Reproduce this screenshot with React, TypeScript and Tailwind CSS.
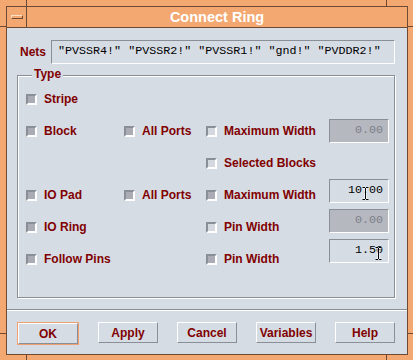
import React from 'react';

const RED = 'text-[#800000]';

// petite case à cocher Motif (enfoncée)
const Check: React.FC<{ light?: boolean }> = ({ light }) => (
  <span
    className={`block w-[11px] h-[11px] shrink-0 border-2 border-t-[#8a8e96] border-l-[#8a8e96] border-b-white border-r-white ${
      light ? 'bg-[#d3d7de]' : 'bg-[#a9acb4]'
    }`}
  />
);

const Toggle: React.FC<{ label: string; light?: boolean }> = ({ label, light }) => (
  <div className="flex items-center gap-[7px]">
    <Check light={light} />
    <span className={`text-[12px] font-bold ${RED} leading-none`}>{label}</span>
  </div>
);

const IBeam: React.FC<{ className: string }> = ({ className }) => (
  <svg className={className} width="7" height="13" viewBox="0 0 7 13">
    <path d="M0.5 0.5h2.5M4 0.5h2.5M3.5 1v11M0.5 12.5h2.5M4 12.5h2.5" stroke="#fff" strokeWidth="2" />
    <path d="M0.5 0.5h2.5M4 0.5h2.5M3.5 1v11M0.5 12.5h2.5M4 12.5h2.5" stroke="#000" strokeWidth="1" />
  </svg>
);

const Field: React.FC<{ value: string; disabled?: boolean; cursor?: string; className?: string }> = ({
  value,
  disabled,
  cursor,
  className = '',
}) => (
  <div
    className={`relative h-[24px] w-[60px] flex items-center justify-end pr-[5px] border border-t-[#8a8e96] border-l-[#8a8e96] border-b-white border-r-white font-['Liberation_Mono',monospace] text-[11.7px] ${
      disabled ? 'bg-[#b6b8c0] text-[#7d7f88]' : 'text-black'
    } ${className}`}
  >
    {value}
    {cursor && <IBeam className={`absolute top-[7px] ${cursor}`} />}
  </div>
);

const Btn: React.FC<{ label: string }> = ({ label }) => (
  <button
    className={`w-[60px] h-[21px] border border-t-white border-l-white border-b-[#8a8e96] border-r-[#8a8e96] bg-[#d6dce4] text-[12px] font-bold ${RED} leading-none`}
  >
    {label}
  </button>
);

export default function App() {
  return (
    <div className="relative w-[413px] h-[360px] bg-[#f3a872] pt-[6px] pl-[6px] pr-[5px] pb-[5px] flex font-['Liberation_Sans',Arial,sans-serif]">
      {/* repères de coin du cadre */}
      <div className="absolute left-[26px] top-0 w-px h-[6px] bg-[#6e4a34]" />
      <div className="absolute left-[386px] top-0 w-px h-[6px] bg-[#6e4a34]" />
      <div className="absolute left-[26px] bottom-0 w-px h-[5px] bg-[#6e4a34]" />
      <div className="absolute left-[386px] bottom-0 w-px h-[5px] bg-[#6e4a34]" />
      <div className="absolute left-0 top-[26px] w-[6px] h-px bg-[#6e4a34]" />
      <div className="absolute left-0 top-[333px] w-[6px] h-px bg-[#6e4a34]" />
      <div className="absolute right-0 top-[26px] w-[5px] h-px bg-[#6e4a34]" />
      <div className="absolute right-0 top-[333px] w-[5px] h-px bg-[#6e4a34]" />

      <div className="flex-1 flex flex-col border border-[#6e4a34]">
        {/* barre de titre */}
        <div className="h-[21px] flex border-b border-[#6e4a34]">
          <div className="w-[20px] border-r border-[#6e4a34] flex items-center justify-center">
            <div className="w-[12px] h-[4px] border border-t-[#fde0c4] border-l-[#fde0c4] border-b-[#6e4a34] border-r-[#6e4a34]" />
          </div>
          <div className="flex-1 flex items-center justify-center text-white font-bold text-[14.5px] leading-none">
            Connect Ring
          </div>
        </div>

        {/* contenu */}
        <div className="flex-1 bg-[#d6dce4] flex flex-col">
          <div className="mt-[12px] pl-[13px] flex items-center gap-[5px]">
            <span className={`text-[12px] font-bold ${RED}`}>Nets</span>
            <div className="w-[344px] h-[24px] flex items-center pl-[6px] border border-t-[#8a8e96] border-l-[#8a8e96] border-b-white border-r-white font-['Liberation_Mono',monospace] text-[11.7px] text-black whitespace-pre">
              "PVSSR4!" "PVSSR2!" "PVSSR1!" "gnd!" "PVDDR2!"
            </div>
          </div>

          {/* groupe Type */}
          <div className="relative mt-[11px] ml-[10px] w-[378px] h-[223px] border border-[#8a8e96] shadow-[inset_1px_1px_0_#fff,1px_1px_0_#fff] flex">
            <span className={`absolute left-[14px] -top-[8px] px-[2px] bg-[#d6dce4] text-[12px] font-bold ${RED} leading-none`}>
              Type
            </span>

            <div className="pt-[7px] pl-[8px] grid grid-cols-[98px_82px_123px] auto-rows-[32px] items-center">
              <Toggle label="Stripe" />
              <div />
              <div />

              <Toggle label="Block" />
              <Toggle label="All Ports" />
              <Toggle label="Maximum Width" light />

              <div />
              <div />
              <Toggle label="Selected Blocks" light />

              <Toggle label="IO Pad" />
              <Toggle label="All Ports" />
              <Toggle label="Maximum Width" />

              <Toggle label="IO Ring" />
              <div />
              <Toggle label="Pin Width" light />

              <Toggle label="Follow Pins" />
              <div />
              <Toggle label="Pin Width" />
            </div>

            <div className="flex flex-col pt-[43px]">
              <Field value="0.00" disabled />
              <Field value="10.00" cursor="left-[32px]" className="mt-[36px]" />
              <Field value="0.00" disabled className="mt-[6px]" />
              <Field value="1.50" cursor="left-[45px]" className="mt-[6px]" />
            </div>
          </div>

          <div className="mt-[11px] h-[2px] border-t border-[#8a8e96] border-b border-b-white" />

          {/* boutons */}
          <div className="mt-[11px] pl-[10px] pr-[12px] flex justify-between">
            <div className="border border-[#f0a070] flex">
              <Btn label="OK" />
            </div>
            <Btn label="Apply" />
            <Btn label="Cancel" />
            <Btn label="Variables" />
            <Btn label="Help" />
          </div>
        </div>
      </div>
    </div>
  );
}
